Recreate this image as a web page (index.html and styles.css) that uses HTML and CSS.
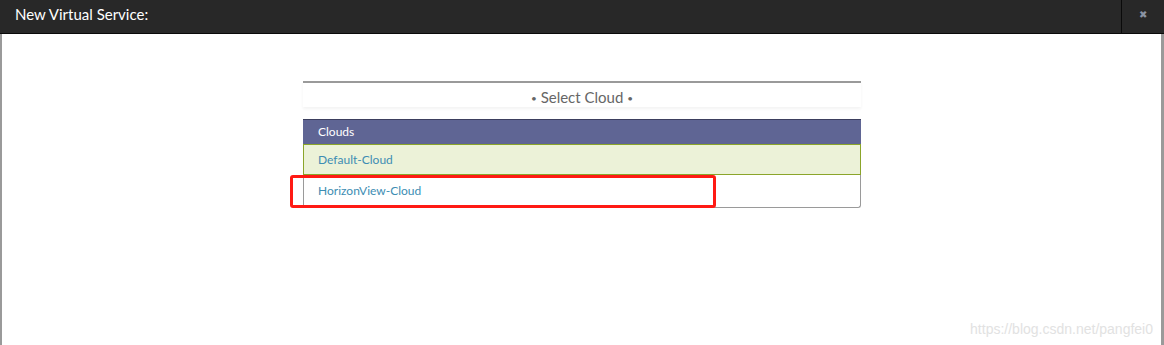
FILE: index.html
```html
<!DOCTYPE html>
<html lang="en">
  <head>
    <meta charset="utf-8" />
    <title>New Virtual Service</title>
    <link rel="stylesheet" href="styles.css">
  </head>
  <body>
    <div class="modal">
      <header class="modal__header">
        <h1 class="modal__title">New Virtual Service:</h1>
        <button class="modal__close">&#x2716;</button>
      </header>

      <section class="modal__body">
        <div class="step">
          <div class="step__title"><span class="dot">&bull;</span> Select Cloud <span class="dot">&bull;</span></div>
        </div>

        <div class="clouds">
          <div class="clouds__head">Clouds</div>
          <div class="clouds__row clouds__row--selected">Default-Cloud</div>
          <div class="clouds__row">HorizonView-Cloud</div>
          <!-- red highlight box from the screenshot -->
          <span class="mark"></span>
        </div>

        <span class="watermark">https://blog.csdn.net/pangfei0</span>
      </section>
    </div>
  </body>
</html>
```

FILE: styles.css
```css
body {
  margin: 0;
  background: #ffffff;
  font-family: Lato, 'Open Sans', sans-serif;
}

.modal {
  width: 1164px;
  height: 345px;
  box-sizing: border-box;
  border-left: 2px solid #9a9a9a;
  border-right: 3px solid #9a9a9a;
  display: flex;
  flex-direction: column;
}

.modal__header {
  background: #282828;
  height: 33px;
  border-bottom: 1px solid #0a0a0a;
  margin-left: -2px;
  margin-right: -3px;
  display: flex;
  align-items: stretch;
}

.modal__title {
  flex: 1;
  margin: 0;
  padding-left: 15px;
  color: #ffffff;
  font-size: 15px;
  font-weight: 400;
  line-height: 29px;
}

.modal__close {
  width: 43px;
  border: 0;
  border-left: 1px solid #0a0a0a;
  background: #282828;
  color: #8a93a3;
  font-size: 10px;
  padding: 0 0 4px 0;
}

.modal__body {
  flex: 1;
  position: relative;
  padding-top: 47px;
}

.step {
  width: 558px;
  margin: 0 0 0 301px;
  border-top: 2px solid #9a9a9a;
  box-shadow: 0 2px 3px rgba(0, 0, 0, 0.05);
  height: 24px;
  text-align: center;
}

.step__title {
  color: #666666;
  font-size: 15px;
  line-height: 28px;
}

.dot {
  font-size: 10px;
  vertical-align: 1px;
}

.clouds {
  position: relative;
  width: 558px;
  margin: 12px 0 0 301px;
  box-sizing: border-box;
  border: 1px solid #9a9a9a;
  border-top: 0;
  border-radius: 0 0 3px 3px;
  font-size: 12px;
}

.clouds__head {
  background: #5f6594;
  border-top: 1px solid #3c3f5e;
  margin: 0 -1px;
  height: 24px;
  line-height: 23px;
  padding-left: 15px;
  color: #ffffff;
}

.clouds__row {
  height: 32px;
  line-height: 31px;
  padding-left: 14px;
  color: #3d8db3;
}

.clouds__row--selected {
  background: #ecf2d8;
  border: 1px solid #8ba52a;
  margin: 0 -1px;
  height: 29px;
  line-height: 30px;
  padding-left: 14px;
}

.mark {
  position: absolute;
  left: -14px;
  top: 56px;
  width: 420px;
  height: 27px;
  border: 3px solid #ff1a14;
  border-radius: 3px;
}

.watermark {
  position: absolute;
  right: 8px;
  bottom: 8px;
  color: #e2e2e2;
  font-family: 'Liberation Sans', Arial, sans-serif;
  font-size: 14px;
}
```
